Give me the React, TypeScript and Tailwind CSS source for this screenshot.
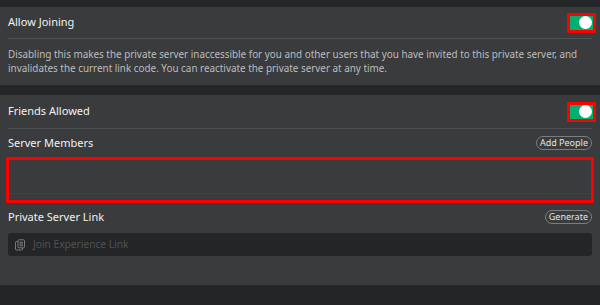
import React from 'react';

function Toggle() {
  return (
    <div className="flex h-[20px] w-[29px] items-center justify-end rounded-[1px] border-[3px] border-[#ff0000] bg-[#00b06f] pr-[1px]">
      <div className="h-[13px] w-[13px] rounded-full bg-white" />
    </div>
  );
}

function PillButton({ label }: { label: string }) {
  return (
    <button className="rounded-full border border-[#7b7e81] px-[3px] py-[0px] text-[9px] leading-[12px] text-[#e4e5e6]">
      {label}
    </button>
  );
}

function CopyIcon() {
  return (
    <svg width="12" height="12" viewBox="0 0 12 12" fill="none" className="shrink-0">
      <rect x="1.5" y="2.5" width="7" height="8.5" rx="1" stroke="#7a7d80" strokeWidth="1" />
      <rect x="4" y="0.8" width="6.5" height="8" rx="1" fill="#232527" stroke="#7a7d80" strokeWidth="1" />
      <line x1="5.5" y1="3.3" x2="9" y2="3.3" stroke="#7a7d80" />
      <line x1="5.5" y1="5" x2="9" y2="5" stroke="#7a7d80" />
      <line x1="5.5" y1="6.7" x2="9" y2="6.7" stroke="#7a7d80" />
    </svg>
  );
}

export default function App() {
  return (
    <div
      className="h-[305px] w-[600px] overflow-hidden bg-[#232527] pt-[7px] text-[#f2f2f3]"
      style={{ fontFamily: '"Noto Sans", "Open Sans", sans-serif' }}
    >
      {/* Allow Joining */}
      <section className="bg-[#393b3d] px-[8px]">
        <div className="flex h-[31px] items-center justify-between">
          <span className="text-[11px]">Allow Joining</span>
          <div className="mr-[-4px]">
            <Toggle />
          </div>
        </div>
        <div className="h-px bg-[#505356]" />
        <p className="pb-[10px] pt-[8px] text-[9.9px] leading-[14px] text-[#bdbebf]">
          Disabling this makes the private server inaccessible for you and other users that you have invited to this private server, and invalidates the current link code. You can reactivate the private server at any time.
        </p>
      </section>

      {/* Friends / members / link */}
      <section className="mt-[10px] h-[190px] bg-[#393b3d] px-[8px]">
        <div className="flex h-[33px] items-center justify-between">
          <span className="text-[11px]">Friends Allowed</span>
          <div className="mr-[-4px]">
            <Toggle />
          </div>
        </div>
        <div className="h-px bg-[#4a4d50]" />
        <div className="flex h-[28px] items-center justify-between">
          <span className="text-[11px]">Server Members</span>
          <PillButton label="Add People" />
        </div>
        <div className="mx-[-2px] h-[46px] border-[3px] border-[#ff0000] bg-[#393b3d]">
          <div className="mt-[33px] h-px bg-[#3f4244]" />
        </div>
        <div className="flex h-[28px] items-center justify-between">
          <span className="text-[11px]">Private Server Link</span>
          <PillButton label="Generate" />
        </div>
        <div className="mt-[2px] flex h-[23px] items-center gap-[7px] rounded-[3px] bg-[#232527] px-[6px]">
          <CopyIcon />
          <span className="text-[10.2px] text-[#4f5255]">Join Experience Link</span>
        </div>
      </section>
    </div>
  );
}
